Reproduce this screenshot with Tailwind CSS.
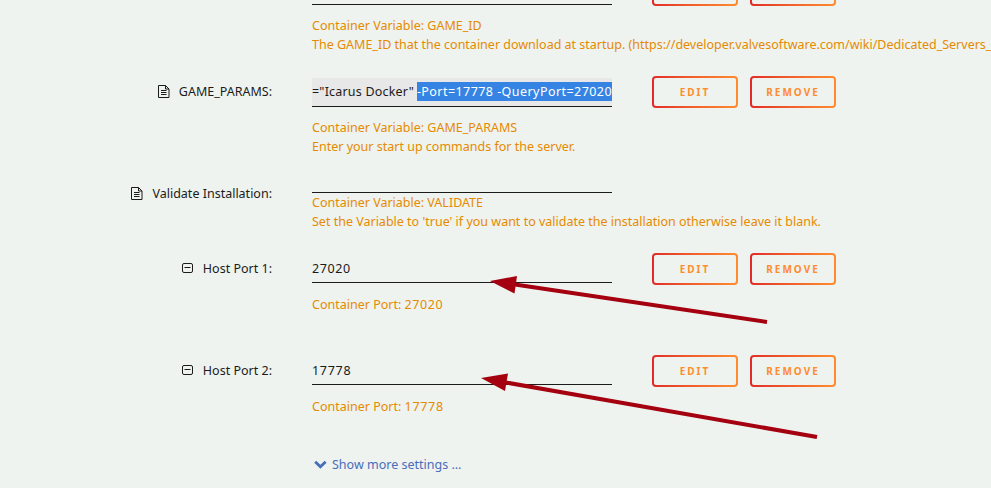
<!DOCTYPE html>
<html lang="en">
<head>
  <meta charset="UTF-8" />
  <meta name="viewport" content="width=device-width, initial-scale=1.0"/>
  <title>Update Container</title>
  <script src="https://cdn.jsdelivr.net/npm/@tailwindcss/browser@4"></script>
</head>
<body class="relative h-[488px] w-[991px] overflow-hidden bg-[#eef3ef] font-['Noto_Sans',sans-serif] text-[12.5px] leading-[19px] text-[#1c1b1b] whitespace-nowrap">
  <main class="-mt-[26px] w-full overflow-hidden">
    <!-- GAME_ID -->
    <section class="flex h-[102px]">
      <div class="w-[272px] shrink-0"></div>
      <div class="ml-10 w-[300px] shrink-0 pt-0.5">
        <div class="h-[29px] border-b border-[#1c1b1b]"></div>
        <p class="mt-[11px] text-[#e68a00]">Container Variable: GAME_ID</p>
        <p class="text-[#e68a00]">The GAME_ID that the container download at startup. (https://developer.valvesoftware.com/wiki/Dedicated_Servers_</p>
      </div>
      <div class="ml-10 flex h-8 gap-3">
        <button class="w-[86px] rounded-[4px] bg-linear-to-r from-[#e22828] to-[#ff8c2f] p-0.5"><span class="flex h-full items-center justify-center rounded-[2px] bg-[#eef3ef] text-[10px] font-bold tracking-[2px] text-[#ff8c2f]">EDIT</span></button>
        <button class="w-[86px] rounded-[4px] bg-linear-to-r from-[#e22828] to-[#ff8c2f] p-0.5"><span class="flex h-full items-center justify-center rounded-[2px] bg-[#eef3ef] text-[10px] font-bold tracking-[2px] text-[#ff8c2f]">REMOVE</span></button>
      </div>
    </section>

    <!-- GAME_PARAMS -->
    <section class="flex h-[102px]">
      <div class="flex h-[31px] w-[272px] shrink-0 items-center justify-end gap-[9px]">
        <svg class="h-[13px] w-3" viewBox="0 0 12 13" fill="none" stroke="#1c1b1b"><path d="M.5 .5h7l3.500 3.500v8.500H.5zM7.500 .5v3.500h3.500M3 5.500h5.500M3 7.500h5.500M3 9.500h5.500"/></svg>
        <span>GAME_PARAMS:</span>
      </div>
      <div class="ml-10 w-[300px] shrink-0 pt-0.5">
        <div class="flex h-[29px] items-center justify-between border-b border-[#1c1b1b] bg-[#e8e8e8] pb-px"><span class="tracking-[0.2px]">="Icarus Docker"</span><span class="bg-[#3584e4] tracking-[0.44px] text-white">-Port=17778 -QueryPort=27020</span></div>
        <p class="mt-[11px] text-[#e68a00]">Container Variable: GAME_PARAMS</p>
        <p class="text-[#e68a00]">Enter your start up commands for the server.</p>
      </div>
      <div class="ml-10 flex h-8 gap-3">
        <button class="w-[86px] rounded-[4px] bg-linear-to-r from-[#e22828] to-[#ff8c2f] p-0.5"><span class="flex h-full items-center justify-center rounded-[2px] bg-[#eef3ef] text-[10px] font-bold tracking-[2px] text-[#ff8c2f]">EDIT</span></button>
        <button class="w-[86px] rounded-[4px] bg-linear-to-r from-[#e22828] to-[#ff8c2f] p-0.5"><span class="flex h-full items-center justify-center rounded-[2px] bg-[#eef3ef] text-[10px] font-bold tracking-[2px] text-[#ff8c2f]">REMOVE</span></button>
      </div>
    </section>

    <!-- Validate -->
    <section class="flex h-[75px]">
      <div class="flex h-[31px] w-[272px] shrink-0 items-center justify-end gap-[9px]">
        <svg class="h-[13px] w-3" viewBox="0 0 12 13" fill="none" stroke="#1c1b1b"><path d="M.5 .5h7l3.500 3.500v8.500H.5zM7.500 .5v3.500h3.500M3 5.500h5.500M3 7.500h5.500M3 9.500h5.500"/></svg>
        <span>Validate Installation:</span>
      </div>
      <div class="ml-10 w-[300px] shrink-0">
        <div class="h-[15px] border-b border-[#1c1b1b]"></div>
        <p class="text-[#e68a00]">Container Variable: VALIDATE</p>
        <p class="text-[#e68a00]">Set the Variable to 'true' if you want to validate the installation otherwise leave it blank.</p>
      </div>
    </section>

    <!-- Host Port 1 -->
    <section class="flex h-[102px]">
      <div class="flex h-[31px] w-[272px] shrink-0 items-center justify-end gap-[10px]">
        <svg class="h-[11px] w-[11px]" viewBox="0 0 11 11" fill="none" stroke="#1c1b1b"><rect x=".5" y=".5" width="10" height="9" rx="1.500"/><path d="M2.500 4.500h6"/></svg>
        <span>Host Port 1:</span>
      </div>
      <div class="ml-10 w-[300px] shrink-0 pt-px">
        <div class="flex h-[29px] items-center border-b border-[#1c1b1b] tracking-[0.6px]">27020</div>
        <p class="mt-3 text-[#e68a00]">Container Port: <span class="tracking-[0.6px]">27020</span></p>
      </div>
      <div class="ml-10 flex h-8 gap-3">
        <button class="w-[86px] rounded-[4px] bg-linear-to-r from-[#e22828] to-[#ff8c2f] p-0.5"><span class="flex h-full items-center justify-center rounded-[2px] bg-[#eef3ef] text-[10px] font-bold tracking-[2px] text-[#ff8c2f]">EDIT</span></button>
        <button class="w-[86px] rounded-[4px] bg-linear-to-r from-[#e22828] to-[#ff8c2f] p-0.5"><span class="flex h-full items-center justify-center rounded-[2px] bg-[#eef3ef] text-[10px] font-bold tracking-[2px] text-[#ff8c2f]">REMOVE</span></button>
      </div>
    </section>

    <!-- Host Port 2 -->
    <section class="flex h-[100px]">
      <div class="flex h-[31px] w-[272px] shrink-0 items-center justify-end gap-[10px]">
        <svg class="h-[11px] w-[11px]" viewBox="0 0 11 11" fill="none" stroke="#1c1b1b"><rect x=".5" y=".5" width="10" height="9" rx="1.500"/><path d="M2.500 4.500h6"/></svg>
        <span>Host Port 2:</span>
      </div>
      <div class="ml-10 w-[300px] shrink-0 pt-px">
        <div class="flex h-[29px] items-center border-b border-[#1c1b1b] tracking-[0.7px]">17778</div>
        <p class="mt-3 text-[#e68a00]">Container Port: <span class="tracking-[0.7px]">17778</span></p>
      </div>
      <div class="ml-10 flex h-8 gap-3">
        <button class="w-[86px] rounded-[4px] bg-linear-to-r from-[#e22828] to-[#ff8c2f] p-0.5"><span class="flex h-full items-center justify-center rounded-[2px] bg-[#eef3ef] text-[10px] font-bold tracking-[2px] text-[#ff8c2f]">EDIT</span></button>
        <button class="w-[86px] rounded-[4px] bg-linear-to-r from-[#e22828] to-[#ff8c2f] p-0.5"><span class="flex h-full items-center justify-center rounded-[2px] bg-[#eef3ef] text-[10px] font-bold tracking-[2px] text-[#ff8c2f]">REMOVE</span></button>
      </div>
    </section>

    <a href="#" class="ml-[314px] flex items-center gap-[5px] text-[#486dba]">
      <svg class="h-[9px] w-[13px]" viewBox="0 0 13 9" fill="none" stroke="currentColor" stroke-width="2.800"><path d="M1.200 1.700l5.200 5 5.200-5"/></svg>
      <span>Show more settings ...</span>
    </a>
  </main>

  <!-- arrows -->
  <svg class="pointer-events-none absolute inset-0 h-[488px] w-[991px]" viewBox="0 0 991 488" fill="#a4000f" stroke="#a4000f">
    <path d="M515 284.500L767 322" stroke-width="4"/>
    <path d="M490 281l27-5-2.500 17.500z" stroke="none"/>
    <path d="M506 382.500L817 437" stroke-width="4"/>
    <path d="M481 378l27-4.500-3 17.500z" stroke="none"/>
  </svg>
</body>
</html>
